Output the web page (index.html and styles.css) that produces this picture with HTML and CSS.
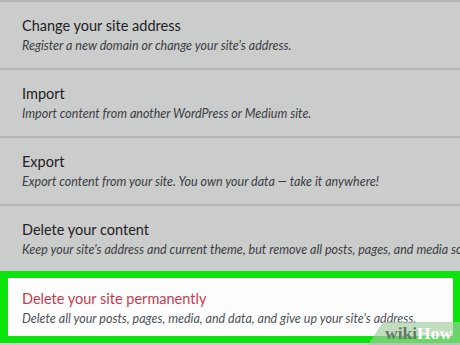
FILE: index.html
```html
<!DOCTYPE html>
<html lang="en">
<head>
    <meta charset="UTF-8">
    <meta name="viewport" content="width=device-width, initial-scale=1.0">
    <title>Site settings</title>
    <link rel="stylesheet" href="styles.css">
</head>
<body>
    <div class="settings">
        <div class="row">
            <div class="row-title">Change your site address</div>
            <div class="row-desc">Register a new domain or change your site's address.</div>
        </div>
        <div class="row">
            <div class="row-title">Import</div>
            <div class="row-desc">Import content from another WordPress or Medium site.</div>
        </div>
        <div class="row">
            <div class="row-title">Export</div>
            <div class="row-desc">Export content from your site. You own your data — take it anywhere!</div>
        </div>
        <div class="row">
            <div class="row-title">Delete your content</div>
            <div class="row-desc">Keep your site's address and current theme, but remove all posts, pages, and media so you can start over.</div>
        </div>

        <!-- riga evidenziata -->
        <div class="row row-danger">
            <div class="row-title">Delete your site permanently</div>
            <div class="row-desc">Delete all your posts, pages, media, and data, and give up your site's address.</div>
        </div>
    </div>

    <div class="watermark"><span class="wiki">wiki</span>How</div>
</body>
</html>
```

FILE: styles.css
```css
body {
    margin: 0;
    width: 460px;
    height: 345px;
    overflow: hidden;
    background-color: #cbcccc;
    font-family: Lato, "Open Sans", sans-serif;
    position: relative;
}

.settings {
    display: flex;
    flex-direction: column;
}

.row {
    height: 66px;
    box-sizing: content-box;
    border-top: 2px solid #b3b5b5;
    padding: 0 0 0 22px;
    white-space: nowrap;
    overflow: hidden;
}

.row-title {
    font-size: 14.5px;
    line-height: 18px;
    color: #1f2123;
    margin-top: 15px;
}

.row-desc {
    font-size: 12.5px;
    font-style: italic;
    line-height: 16px;
    color: #3b3e42;
    margin-top: 3px;
}

.row-danger {
    height: 58px;
    border: 7px solid #0be40b;
    border-left-width: 8px;
    background-color: #fdfdfd;
    padding-left: 14px;
    margin-top: -1px;
}

.row-danger .row-title {
    color: #c93a4e;
    margin-top: 12px;
}

.row-danger .row-desc {
    color: #505357;
}

/* logo in basso a destra */
.watermark {
    position: absolute;
    right: 0;
    bottom: 0;
    width: 75px;
    height: 23px;
    padding-left: 17px;
    background-color: rgba(160, 205, 160, 0.65);
    clip-path: polygon(15px 0, 100% 0, 100% 100%, 0 100%);
    font-family: "Liberation Serif", serif;
    font-weight: bold;
    font-size: 17.5px;
    line-height: 23px;
    color: #ffffff;
    white-space: nowrap;
    box-sizing: content-box;
}

.wiki {
    color: #667866;
}
```
